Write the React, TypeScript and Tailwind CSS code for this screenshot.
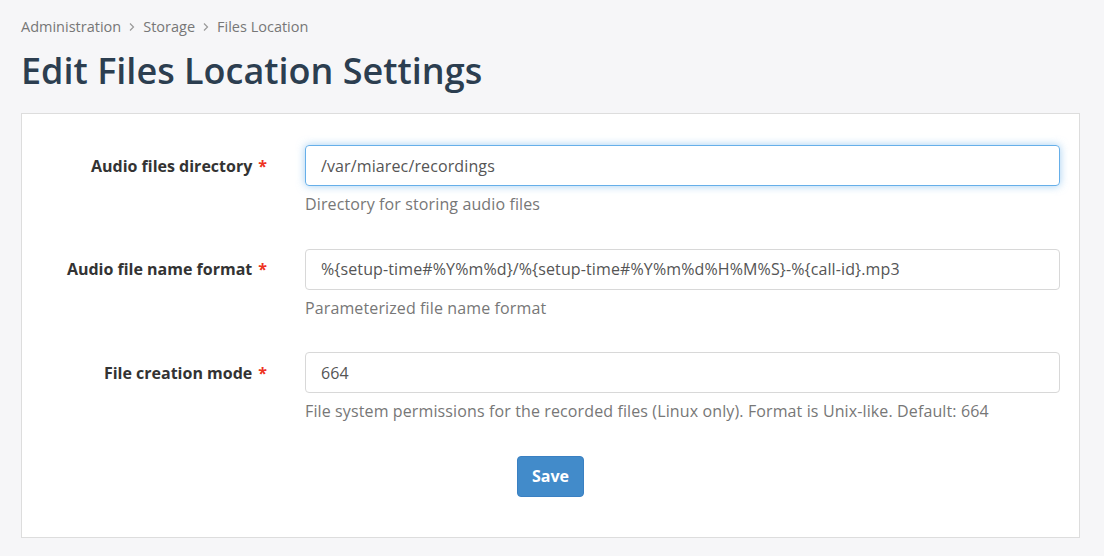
import React from "react"

const fields = [
  {
    label: "Audio files directory",
    value: "/var/miarec/recordings",
    help: "Directory for storing audio files",
    focused: true,
  },
  {
    label: "Audio file name format",
    value: "%{setup-time#%Y%m%d}/%{setup-time#%Y%m%d%H%M%S}-%{call-id}.mp3",
    help: "Parameterized file name format",
    focused: false,
  },
  {
    label: "File creation mode",
    value: "664",
    help: "File system permissions for the recorded files (Linux only). Format is Unix-like. Default: 664",
    focused: false,
  },
]

function Chevron() {
  return (
    <svg className="mx-[6px] h-[10px] w-[10px] text-[#999]" viewBox="0 0 10 10" fill="none">
      <path d="M3 1.5 6.5 5 3 8.5" stroke="currentColor" strokeWidth="1.2" />
    </svg>
  )
}

export default function App() {
  return (
    <div
      className="min-h-[556px] bg-[#f6f6f8] pl-[21px] pr-[24px] pt-[17px] pb-[20px] text-[#555]"
      style={{ fontFamily: '"Open Sans", "Noto Sans", sans-serif' }}
    >
      <nav className="flex items-center text-[14.5px] leading-[20px] text-[#777]">
        <span>Administration</span>
        <Chevron />
        <span>Storage</span>
        <Chevron />
        <span>Files Location</span>
      </nav>

      <h1 className="mt-[12px] text-[36px] font-semibold leading-[44px] text-[#2c3e50]">
        Edit Files Location Settings
      </h1>

      <div className="mt-[20px] border border-[#dddddd] bg-white pt-[31px] pb-[40px]">
        {fields.map((f) => (
          <div key={f.label} className="mb-[33.5px] flex">
            <label className="flex h-[41px] w-[245px] shrink-0 items-center justify-end text-[16px] font-bold text-[#333]">
              {f.label}
              <span className="ml-[6px] text-[#e32]">*</span>
            </label>
            <div className="ml-[38px] w-[755px]">
              <div
                className={
                  f.focused
                    ? "flex h-[41px] items-center rounded-[4px] border border-[#66afe9] px-[15px] text-[16px] tracking-[0.12px] text-[#555] shadow-[0_0_8px_rgba(102,175,233,0.6)]"
                    : "flex h-[41px] items-center rounded-[4px] border border-[#d8d8d8] px-[15px] text-[16px] tracking-[0.12px] text-[#555]"
                }
              >
                {f.value}
              </div>
              <p className="mt-[7px] text-[16px] leading-[22px] tracking-[0.12px] text-[#777]">{f.help}</p>
            </div>
          </div>
        ))}

        <div className="flex justify-center">
          <button className="h-[41px] rounded-[4px] border border-[#3a80c2] bg-[#428bca] px-[14px] text-[16px] font-bold text-white">
            Save
          </button>
        </div>
      </div>
    </div>
  )
}
